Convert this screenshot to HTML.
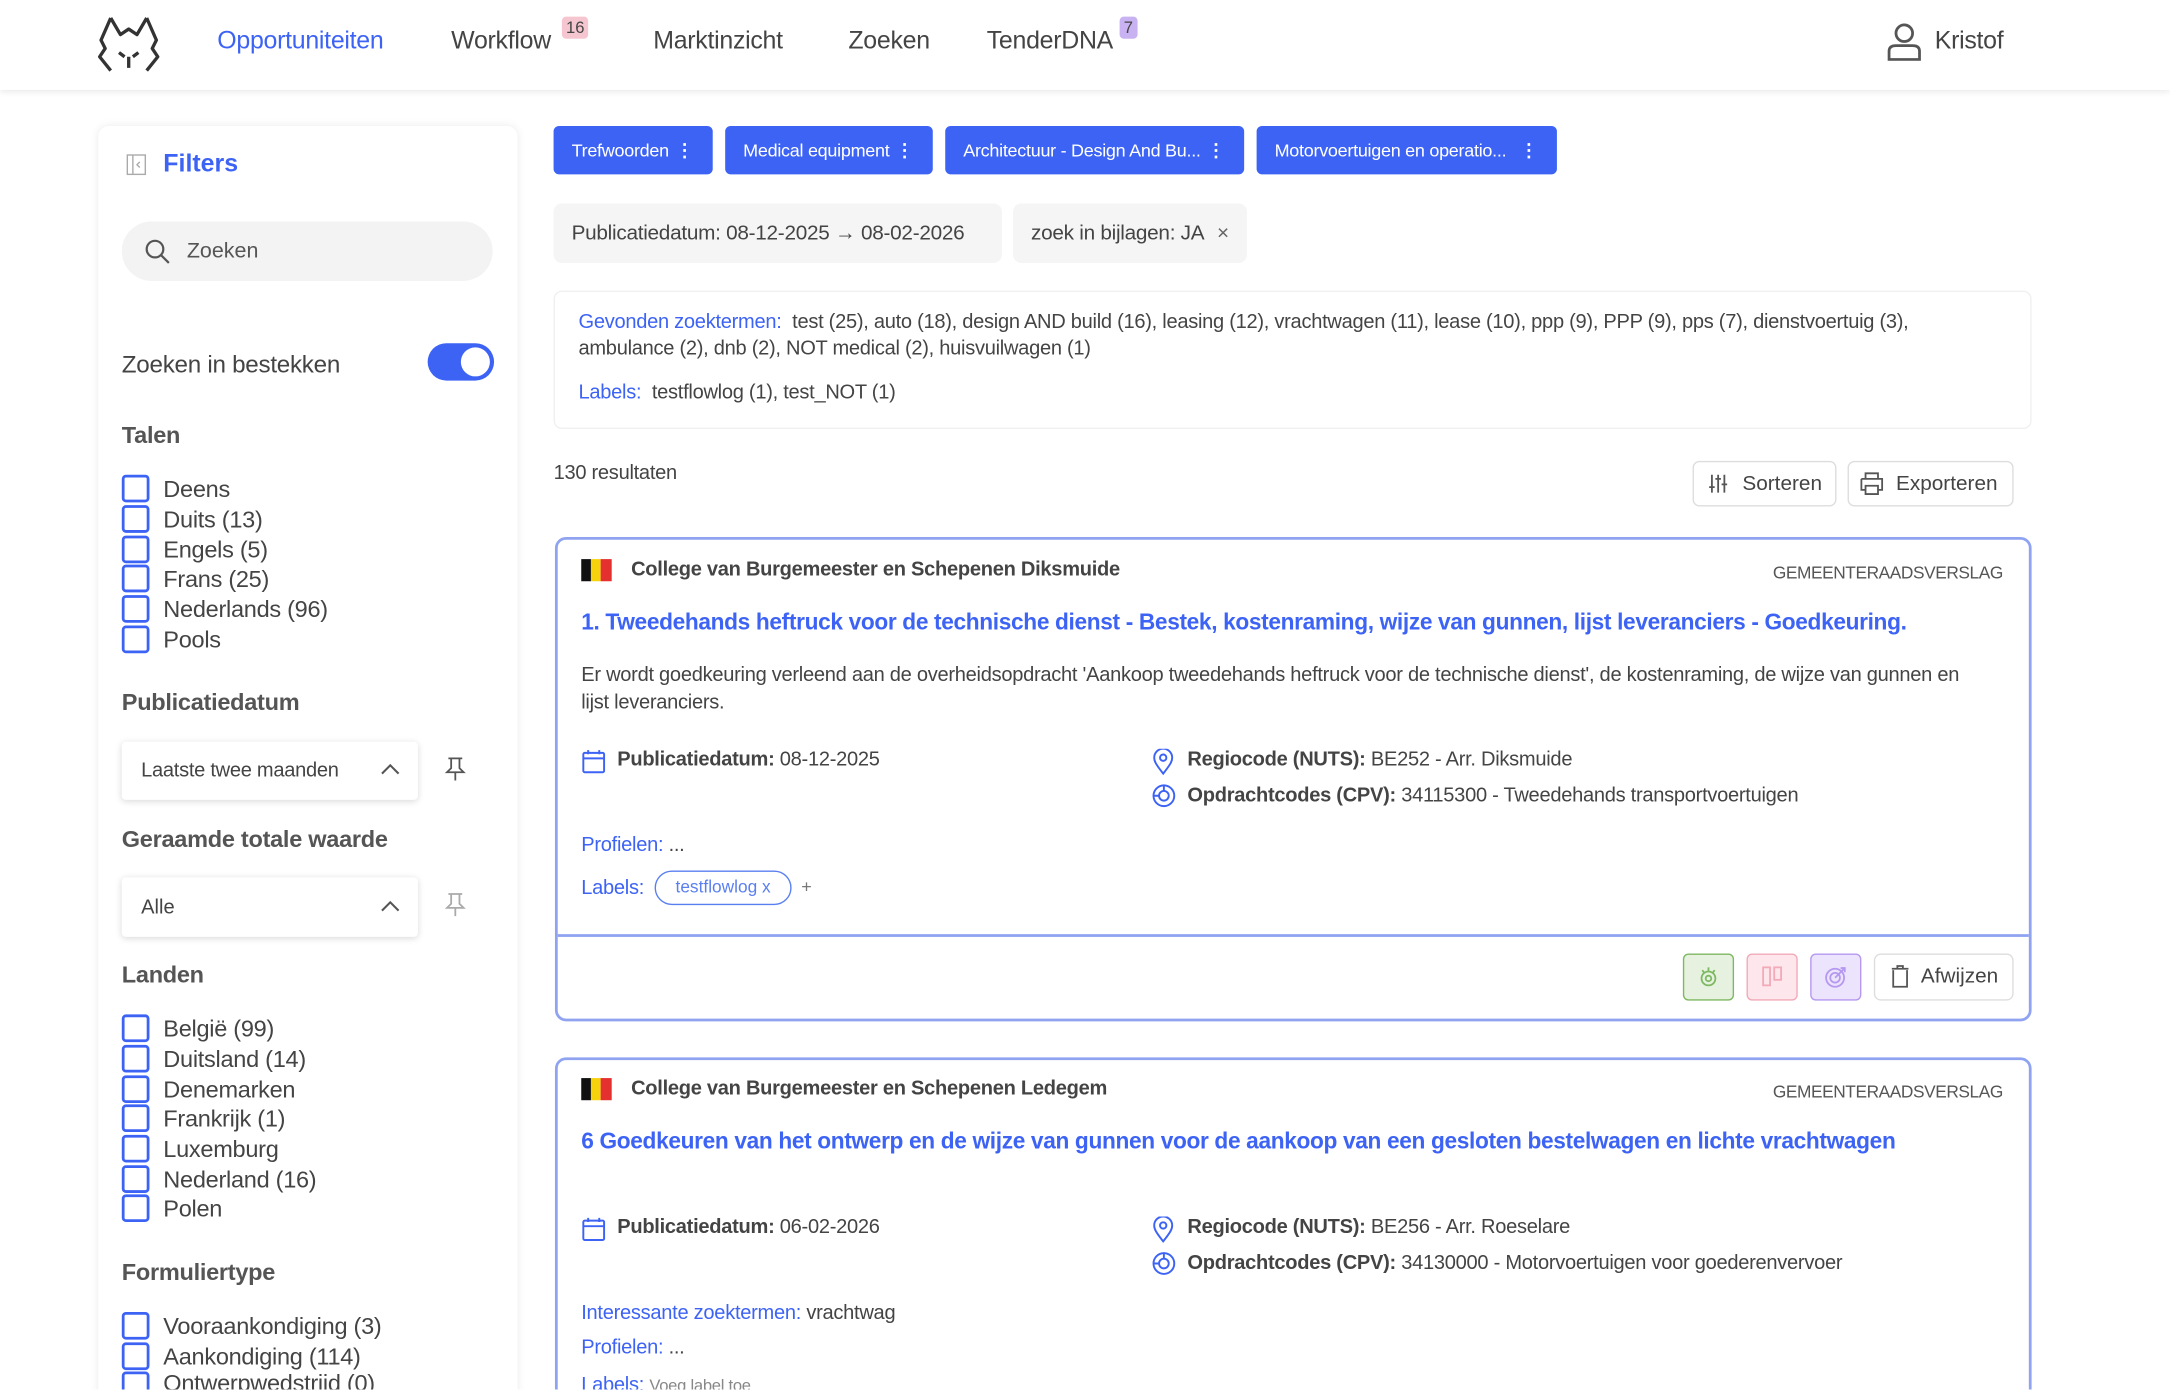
<!DOCTYPE html>
<html><head><meta charset="utf-8"><style>
html,body{margin:0;padding:0;width:2170px;height:1390px;overflow:hidden;background:#fff;}
#w{position:relative;width:2170px;height:1390px;overflow:hidden;}
#s{position:absolute;left:0;top:0;width:1568px;height:1004px;overflow:hidden;transform:scale(1.38393);transform-origin:0 0;font-family:"Liberation Sans",sans-serif;color:#444;}
.a{position:absolute;white-space:nowrap;}
.nav{font-size:18px;color:#444;top:19px;letter-spacing:-0.2px;}
.badge{position:absolute;font-size:12px;border-radius:3px;padding:1px 3px;color:#444;}
.card{position:absolute;background:#fff;}
.cb{position:absolute;left:88px;width:16px;height:16px;border:2px solid #3d63f5;border-radius:3px;}
.cl{position:absolute;left:118px;font-size:17px;color:#444;letter-spacing:-0.2px;}
.h{position:absolute;left:88px;font-size:17px;font-weight:bold;color:#555;letter-spacing:-0.2px;}
.chip{position:absolute;top:91px;height:35px;background:#3d63f5;color:#fff;border-radius:4px;font-size:13px;line-height:35px;padding-left:13px;box-sizing:border-box;white-space:nowrap;letter-spacing:-0.2px;}
.chip b{position:absolute;right:14px;top:0;font-weight:bold;}
.gp{position:absolute;top:147px;height:43px;background:#f5f5f5;border-radius:6px;font-size:15px;line-height:43px;padding-left:13px;box-sizing:border-box;white-space:nowrap;letter-spacing:-0.2px;}
.bl{color:#3d63f5;}
.btn{position:absolute;border:1.5px solid #ddd;border-radius:5px;background:#fff;font-size:15px;box-sizing:border-box;}
.c{position:absolute;left:401px;width:1067px;border:2px solid #8fa3f0;border-radius:8px;box-sizing:border-box;background:#fff;}
.t{font-size:14.5px;letter-spacing:-0.2px;}
</style></head><body><div id="w"><div id="s">
<div class="a" style="left:0;top:0;width:1568px;height:65px;background:#fff;box-shadow:0 2px 4px rgba(0,0,0,.08);"></div>
<svg class="a" style="left:70px;top:11px" width="46" height="42" viewBox="0 0 46 42" fill="none" stroke="#333" stroke-width="2.4" stroke-linejoin="round"><path d="M10 2 L3 18 L6 24 L2 30 L10 40 M36 2 L43 18 L40 24 L44 30 L36 40 M10 2 L17 14 L23 10 L29 14 L36 2 M16 27 L20 30 M30 27 L26 30 M23 30 L23 38"/></svg>
<div class="a nav" style="left:157px;color:#3d63f5">Opportuniteiten</div>
<div class="a nav" style="left:326px">Workflow</div>
<div class="badge" style="left:406px;top:12px;background:#f6c6d0">16</div>
<div class="a nav" style="left:472px">Marktinzicht</div>
<div class="a nav" style="left:613px">Zoeken</div>
<div class="a nav" style="left:713px">TenderDNA</div>
<div class="badge" style="left:809px;top:12px;background:#c9b2f2">7</div>
<svg class="a" style="left:1363px;top:16px" width="26" height="28" viewBox="0 0 26 28" fill="none" stroke="#555" stroke-width="2"><circle cx="13" cy="8" r="6"/><path d="M2 27 V21 Q2 17 7 17 H19 Q24 17 24 21 V27 Z"/></svg>
<div class="a nav" style="left:1398px;">Kristof</div>

<div class="card" style="left:71px;top:91px;width:303px;height:930px;border-radius:8px;box-shadow:0 0 6px rgba(0,0,0,.08);"></div>
<svg class="a" style="left:91px;top:111px" width="16" height="16" viewBox="0 0 16 16" fill="none" stroke="#aaa" stroke-width="1"><rect x="1" y="1" width="13" height="14"/><path d="M5 1 V15 M10 6 L8 8 L10 10"/></svg>
<div class="a bl" style="left:118px;top:108px;font-size:18px;font-weight:bold">Filters</div>
<div class="a" style="left:88px;top:160px;width:268px;height:43px;background:#f3f3f3;border-radius:22px;"></div>
<svg class="a" style="left:104px;top:172px" width="20" height="20" viewBox="0 0 20 20" fill="none" stroke="#555" stroke-width="1.6"><circle cx="8" cy="8" r="6"/><path d="M12.5 12.5 L18 18"/></svg>
<div class="a" style="left:135px;top:173px;font-size:15.5px;color:#555">Zoeken</div>
<div class="a" style="left:88px;top:253px;font-size:17.5px;letter-spacing:-0.2px">Zoeken in bestekken</div>
<div class="a" style="left:309px;top:248px;width:48px;height:27px;background:#3d63f5;border-radius:14px"><div class="a" style="left:24px;top:3px;width:21px;height:21px;border-radius:50%;background:#fff"></div></div>
<div class="h" style="top:305px">Talen</div>
<div class="cb" style="top:343px"></div><div class="cl" style="top:344px">Deens</div>
<div class="cb" style="top:365px"></div><div class="cl" style="top:366px">Duits (13)</div>
<div class="cb" style="top:387px"></div><div class="cl" style="top:388px">Engels (5)</div>
<div class="cb" style="top:408px"></div><div class="cl" style="top:409px">Frans (25)</div>
<div class="cb" style="top:430px"></div><div class="cl" style="top:431px">Nederlands (96)</div>
<div class="cb" style="top:452px"></div><div class="cl" style="top:453px">Pools</div>
<div class="h" style="top:498px">Publicatiedatum</div>
<div class="a" style="left:88px;top:536px;width:214px;height:42px;background:#fff;box-shadow:0 1px 5px rgba(0,0,0,.15);border-radius:3px"></div>
<div class="a" style="left:102px;top:549px;font-size:14.5px;letter-spacing:-0.2px">Laatste twee maanden</div>
<svg class="a" style="left:275px;top:551px" width="14" height="10" viewBox="0 0 14 10" fill="none" stroke="#555" stroke-width="1.5"><path d="M1 8 L7 2 L13 8"/></svg>
<svg class="a" style="left:321px;top:547px" width="16" height="18" viewBox="0 0 16 18" fill="none" stroke="#555" stroke-width="1.3"><path d="M3 1 H13 M5 1 V8 L2 11 H14 L11 8 V1 M8 11 V17"/></svg>
<div class="h" style="top:597px">Geraamde totale waarde</div>
<div class="a" style="left:88px;top:634px;width:214px;height:43px;background:#fff;box-shadow:0 1px 5px rgba(0,0,0,.15);border-radius:3px"></div>
<div class="a" style="left:102px;top:648px;font-size:14.5px">Alle</div>
<svg class="a" style="left:275px;top:650px" width="14" height="10" viewBox="0 0 14 10" fill="none" stroke="#555" stroke-width="1.5"><path d="M1 8 L7 2 L13 8"/></svg>
<svg class="a" style="left:321px;top:645px" width="16" height="18" viewBox="0 0 16 18" fill="none" stroke="#aaa" stroke-width="1.3"><path d="M3 1 H13 M5 1 V8 L2 11 H14 L11 8 V1 M8 11 V17"/></svg>
<div class="h" style="top:695px">Landen</div>
<div class="cb" style="top:733px"></div><div class="cl" style="top:734px">België (99)</div>
<div class="cb" style="top:755px"></div><div class="cl" style="top:756px">Duitsland (14)</div>
<div class="cb" style="top:777px"></div><div class="cl" style="top:778px">Denemarken</div>
<div class="cb" style="top:798px"></div><div class="cl" style="top:799px">Frankrijk (1)</div>
<div class="cb" style="top:820px"></div><div class="cl" style="top:821px">Luxemburg</div>
<div class="cb" style="top:842px"></div><div class="cl" style="top:843px">Nederland (16)</div>
<div class="cb" style="top:863px"></div><div class="cl" style="top:864px">Polen</div>
<div class="h" style="top:910px">Formuliertype</div>
<div class="cb" style="top:948px"></div><div class="cl" style="top:949px">Vooraankondiging (3)</div>
<div class="cb" style="top:970px"></div><div class="cl" style="top:971px">Aankondiging (114)</div>
<div class="cb" style="top:991px"></div><div class="cl" style="top:990px">Ontwerpwedstrijd (0)</div>

<div class="chip" style="left:400px;width:115px">Trefwoorden<b>⋮</b></div>
<div class="chip" style="left:524px;width:150px">Medical equipment<b>⋮</b></div>
<div class="chip" style="left:683px;width:216px">Architectuur - Design And Bu...<b>⋮</b></div>
<div class="chip" style="left:908px;width:217px">Motorvoertuigen en operatio...<b>⋮</b></div>
<div class="gp" style="left:400px;width:324px">Publicatiedatum: 08-12-2025 → 08-02-2026</div>
<div class="gp" style="left:732px;width:169px">zoek in bijlagen: JA <span style="margin-left:6px;color:#666">×</span></div>
<div class="a" style="left:400px;top:210px;width:1068px;height:100px;border:1px solid #f0f0f0;border-radius:6px;box-sizing:border-box"></div>
<div class="a t" style="left:418px;top:224px;line-height:19px;white-space:normal;width:1000px"><span class="bl">Gevonden zoektermen:</span>&nbsp; test (25), auto (18), design AND build (16), leasing (12), vrachtwagen (11), lease (10), ppp (9), PPP (9), pps (7), dienstvoertuig (3), ambulance (2), dnb (2), NOT medical (2), huisvuilwagen (1)</div>
<div class="a t" style="left:418px;top:276px"><span class="bl">Labels:</span>&nbsp; testflowlog (1), test_NOT (1)</div>
<div class="a t" style="left:400px;top:334px">130 resultaten</div>
<div class="btn" style="left:1223px;top:333px;width:104px;height:33px"><span class="a" style="left:35px;top:7px">Sorteren</span></div>
<svg class="a" style="left:1234px;top:342px" width="15" height="15" viewBox="0 0 15 15" fill="none" stroke="#555" stroke-width="1.3"><path d="M3 1 V14 M7.5 1 V14 M12 1 V14"/><path d="M1 10 H5 M5.5 4 H9.5 M10 8 H14"/></svg>
<div class="btn" style="left:1335px;top:333px;width:120px;height:33px"><span class="a" style="left:34px;top:7px">Exporteren</span></div>
<svg class="a" style="left:1343px;top:341px" width="19" height="17" viewBox="0 0 19 17" fill="none" stroke="#555" stroke-width="1.3"><path d="M5 5 V1 H14 V5 M2 5 H17 V13 H14 M5 13 H2 V5 M5 10 H14 V16 H5 Z"/></svg>

<div class="c" style="top:388px;height:350px"></div>
<div class="a" style="left:403px;top:675px;width:1063px;height:2px;background:#8fa3f0"></div>
<div class="a" style="left:420px;top:404px;width:7px;height:16px;background:#111"></div><div class="a" style="left:427px;top:404px;width:7px;height:16px;background:#f5d20c"></div><div class="a" style="left:434px;top:404px;width:8px;height:16px;background:#e53030"></div>
<div class="a t" style="left:456px;top:404px;font-weight:bold;color:#444">College van Burgemeester en Schepenen Diksmuide</div>
<div class="a" style="left:1281px;top:407px;font-size:12.5px;color:#555;letter-spacing:-0.3px">GEMEENTERAADSVERSLAG</div>
<div class="a bl" style="left:420px;top:441px;font-size:16.4px;font-weight:bold;letter-spacing:-0.25px">1. Tweedehands heftruck voor de technische dienst - Bestek, kostenraming, wijze van gunnen, lijst leveranciers - Goedkeuring.</div>
<div class="a t" style="left:420px;top:479px;width:1015px;white-space:normal;line-height:19.5px">Er wordt goedkeuring verleend aan de overheidsopdracht 'Aankoop tweedehands heftruck voor de technische dienst', de kostenraming, de wijze van gunnen en lijst leveranciers.</div>
<svg class="a" style="left:420px;top:541px" width="18" height="18" viewBox="0 0 18 18" fill="none" stroke="#3d63f5" stroke-width="1.4"><rect x="1.5" y="3" width="15" height="14" rx="1"/><path d="M1.5 7 H16.5 M5 1 V4 M13 1 V4"/></svg>
<div class="a t" style="left:446px;top:541px"><b>Publicatiedatum:</b> 08-12-2025</div>
<svg class="a" style="left:833px;top:541px" width="15" height="19" viewBox="0 0 15 19" fill="none" stroke="#3d63f5" stroke-width="1.4"><path d="M7.5 18 C2 11 1 9 1 6.5 A6.5 6.5 0 0 1 14 6.5 C14 9 13 11 7.5 18Z"/><circle cx="7.5" cy="6.5" r="2.3"/></svg>
<div class="a t" style="left:858px;top:541px"><b>Regiocode (NUTS):</b> BE252 - Arr. Diksmuide</div>
<svg class="a" style="left:832px;top:566px" width="18" height="18" viewBox="0 0 18 18" fill="none" stroke="#3d63f5" stroke-width="1.4"><circle cx="9" cy="9" r="7.5"/><circle cx="9" cy="9" r="3.5"/><path d="M9 1.5 V5.5 M1.5 9 H5.5"/></svg>
<div class="a t" style="left:858px;top:567px"><b>Opdrachtcodes (CPV):</b> 34115300 - Tweedehands transportvoertuigen</div>
<div class="a t" style="left:420px;top:603px"><span class="bl">Profielen:</span> ...</div>
<div class="a t" style="left:420px;top:634px"><span class="bl">Labels:</span></div>
<div class="a" style="left:473px;top:629px;width:99px;height:25px;border:1.5px solid #5a7ff0;border-radius:13px;box-sizing:border-box;color:#5a7ff0;font-size:12.5px;line-height:22px;text-align:center">testflowlog x</div>
<div class="a" style="left:579px;top:633px;font-size:13px;color:#777">+</div>
<div class="a" style="left:1216px;top:689px;width:37px;height:34px;background:#e6f2df;border:1.5px solid #7db862;border-radius:4px;box-sizing:border-box"></div>
<svg class="a" style="left:1226px;top:698px" width="17" height="16" viewBox="0 0 17 16" fill="none" stroke="#7db862" stroke-width="1.3"><circle cx="8.5" cy="9" r="5"/><circle cx="8.5" cy="9" r="2"/><path d="M4 3 L5.5 5 M13 3 L11.5 5 M8.5 1 V3.5"/></svg>
<div class="a" style="left:1262px;top:689px;width:37px;height:34px;background:#fde7ec;border:1.5px solid #f2a9b8;border-radius:4px;box-sizing:border-box"></div>
<svg class="a" style="left:1273px;top:698px" width="15" height="15" viewBox="0 0 15 15" fill="none" stroke="#f2a9b8" stroke-width="1.3"><rect x="1" y="1" width="5" height="13"/><rect x="9" y="1" width="5" height="9"/></svg>
<div class="a" style="left:1308px;top:689px;width:37px;height:34px;background:#ece3fd;border:1.5px solid #b598f0;border-radius:4px;box-sizing:border-box"></div>
<svg class="a" style="left:1318px;top:698px" width="17" height="16" viewBox="0 0 17 16" fill="none" stroke="#b598f0" stroke-width="1.3"><circle cx="8" cy="8.5" r="6.5"/><circle cx="8" cy="8.5" r="3.5"/><path d="M8 8.5 L15 1.5 M12 1.5 H15 V4.5"/></svg>
<div class="btn" style="left:1354px;top:689px;width:101px;height:34px"><span class="a" style="left:33px;top:7px">Afwijzen</span></div>
<svg class="a" style="left:1366px;top:697px" width="14" height="17" viewBox="0 0 14 17" fill="none" stroke="#555" stroke-width="1.3"><path d="M2 4 V16 H12 V4 M1 3 H13 M5 3 V1 H9 V3"/></svg>

<div class="c" style="top:764px;height:260px"></div>
<div class="a" style="left:420px;top:779px;width:7px;height:16px;background:#111"></div><div class="a" style="left:427px;top:779px;width:7px;height:16px;background:#f5d20c"></div><div class="a" style="left:434px;top:779px;width:8px;height:16px;background:#e53030"></div>
<div class="a t" style="left:456px;top:779px;font-weight:bold">College van Burgemeester en Schepenen Ledegem</div>
<div class="a" style="left:1281px;top:782px;font-size:12.5px;color:#555;letter-spacing:-0.3px">GEMEENTERAADSVERSLAG</div>
<div class="a bl" style="left:420px;top:816px;font-size:16.4px;font-weight:bold;letter-spacing:-0.25px">6 Goedkeuren van het ontwerp en de wijze van gunnen voor de aankoop van een gesloten bestelwagen en lichte vrachtwagen</div>
<svg class="a" style="left:420px;top:879px" width="18" height="18" viewBox="0 0 18 18" fill="none" stroke="#3d63f5" stroke-width="1.4"><rect x="1.5" y="3" width="15" height="14" rx="1"/><path d="M1.5 7 H16.5 M5 1 V4 M13 1 V4"/></svg>
<div class="a t" style="left:446px;top:879px"><b>Publicatiedatum:</b> 06-02-2026</div>
<svg class="a" style="left:833px;top:879px" width="15" height="19" viewBox="0 0 15 19" fill="none" stroke="#3d63f5" stroke-width="1.4"><path d="M7.5 18 C2 11 1 9 1 6.5 A6.5 6.5 0 0 1 14 6.5 C14 9 13 11 7.5 18Z"/><circle cx="7.5" cy="6.5" r="2.3"/></svg>
<div class="a t" style="left:858px;top:879px"><b>Regiocode (NUTS):</b> BE256 - Arr. Roeselare</div>
<svg class="a" style="left:832px;top:904px" width="18" height="18" viewBox="0 0 18 18" fill="none" stroke="#3d63f5" stroke-width="1.4"><circle cx="9" cy="9" r="7.5"/><circle cx="9" cy="9" r="3.5"/><path d="M9 1.5 V5.5 M1.5 9 H5.5"/></svg>
<div class="a t" style="left:858px;top:905px"><b>Opdrachtcodes (CPV):</b> 34130000 - Motorvoertuigen voor goederenvervoer</div>
<div class="a t" style="left:420px;top:941px"><span class="bl">Interessante zoektermen:</span> vrachtwag</div>
<div class="a t" style="left:420px;top:966px"><span class="bl">Profielen:</span> ...</div>
<div class="a t" style="left:420px;top:993px"><span class="bl">Labels:</span> <span style="font-size:12px;color:#888">Voeg label toe</span></div>
</div></div></body></html>
